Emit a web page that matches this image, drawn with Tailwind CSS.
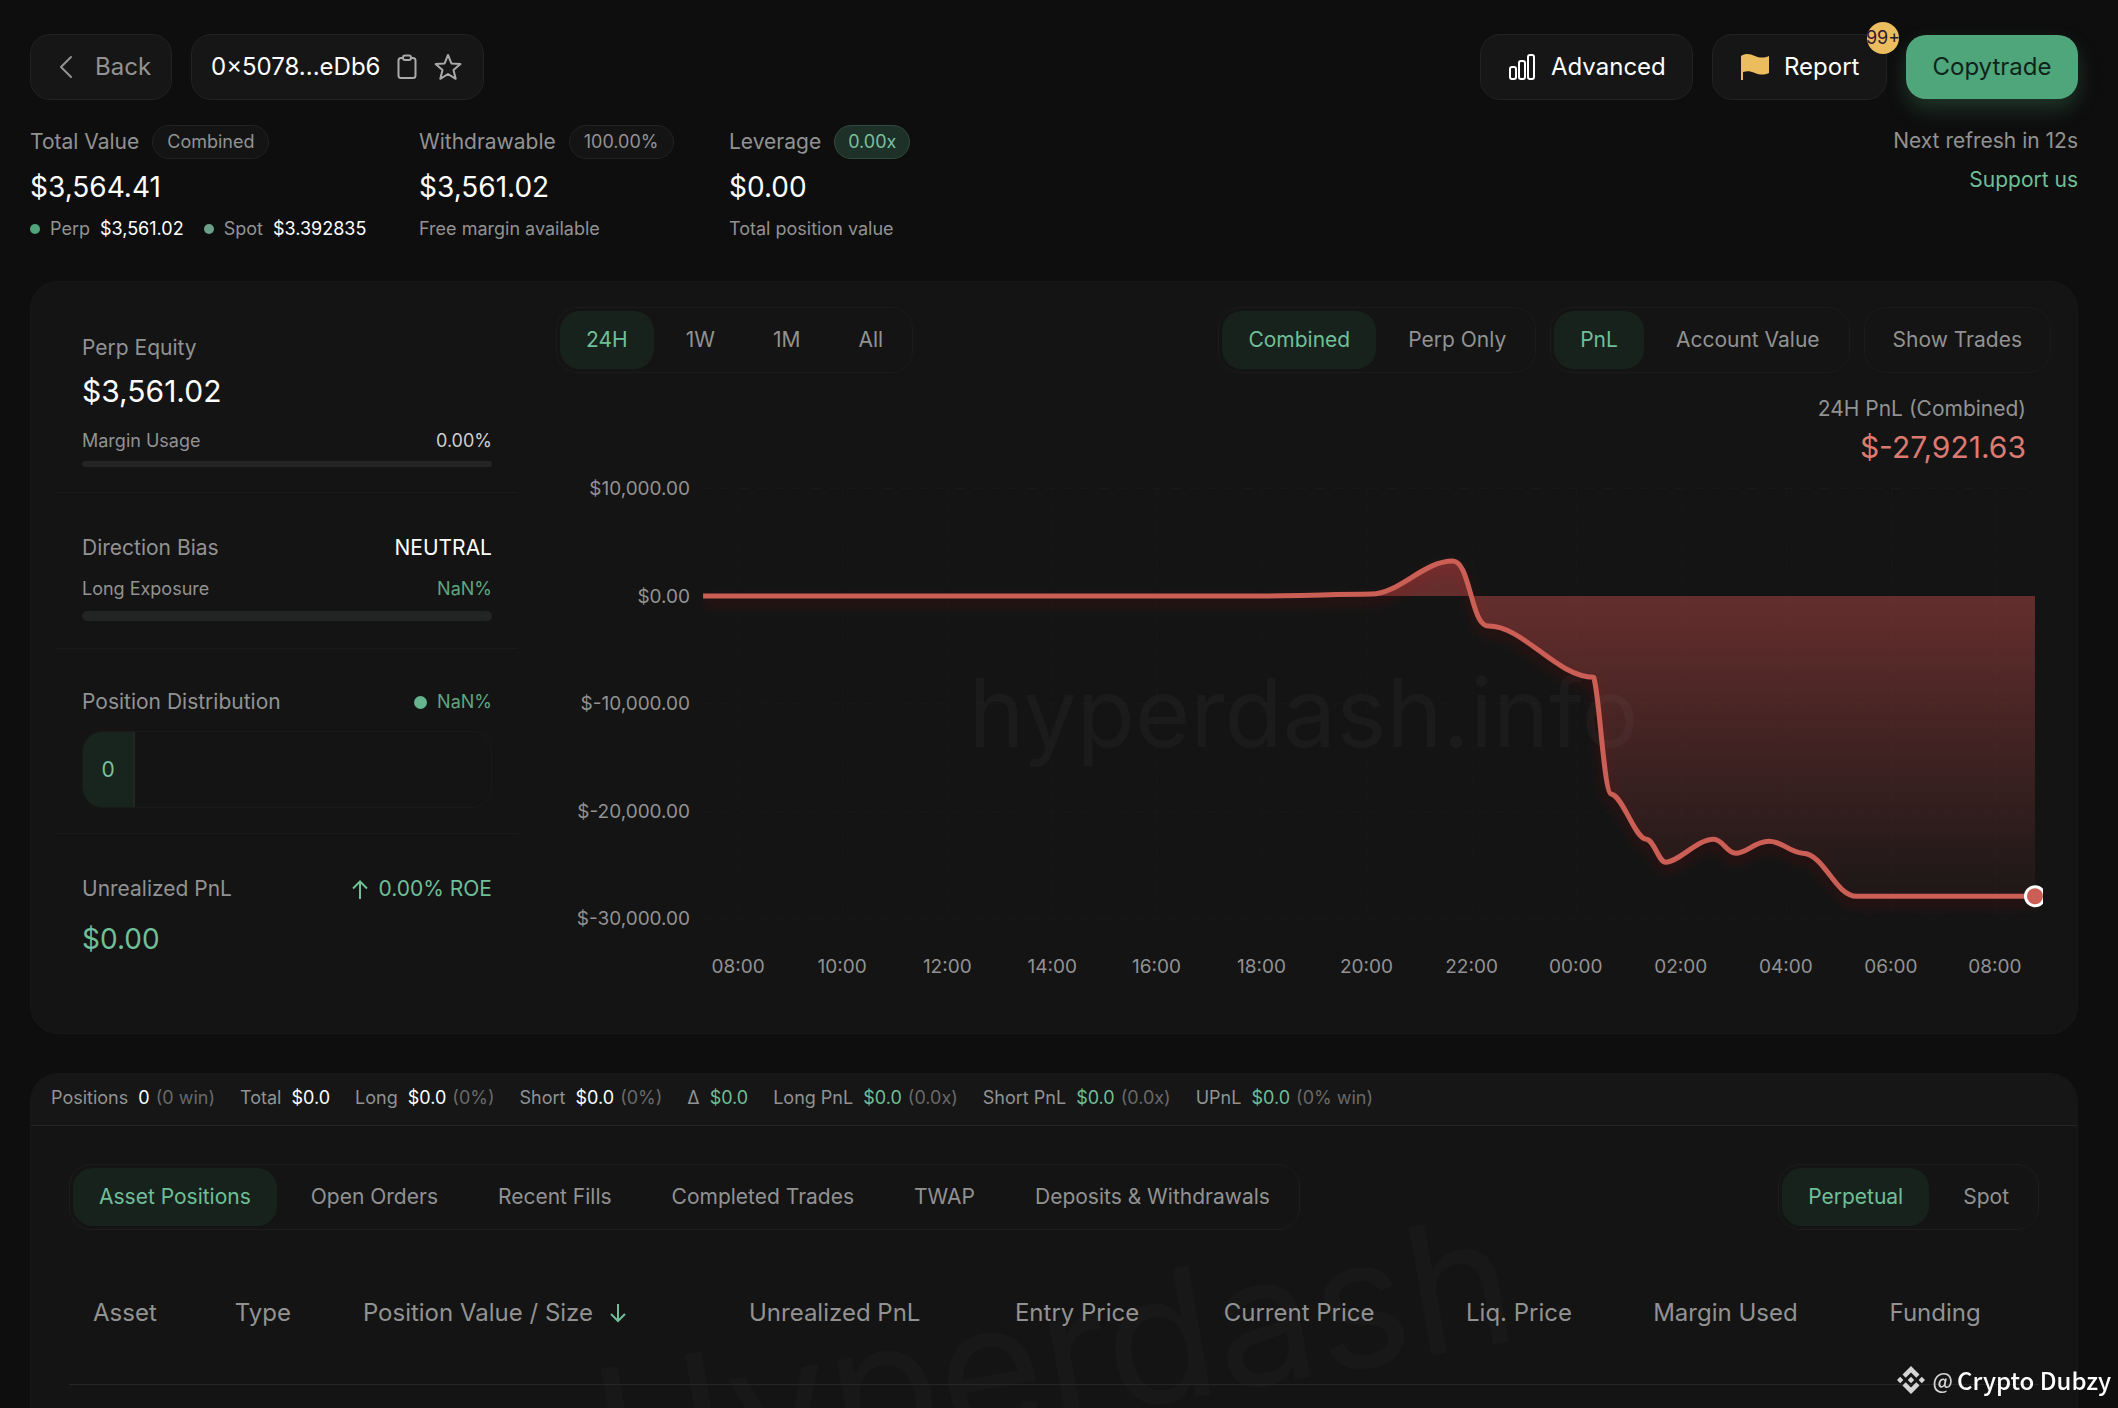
<!DOCTYPE html>
<html lang="en">
<head>
<meta charset="utf-8">
<title>Trader 0x5078...eDb6</title>
<script src="https://cdn.jsdelivr.net/npm/@tailwindcss/browser@4"></script>
</head>
<body class="h-screen overflow-hidden bg-[#0e0e0e] font-['Inter',sans-serif] text-[#929292]">
<div class="flex h-full flex-col pr-10 pl-[30px] pt-[34px]">

  <!-- Top bar -->
  <header class="flex shrink-0 items-center justify-between">
    <div class="flex gap-[19px]">
      <button class="flex h-[66px] w-[142px] items-center gap-[22px] rounded-[20px] border border-[#222] bg-[#161616] pl-7 text-2xl">
        <svg class="h-6 w-[14px]" viewBox="0 0 14 24" fill="none" stroke="currentColor" stroke-width="2" stroke-linecap="round" stroke-linejoin="round"><path d="M12 2 2 12l10 10"/></svg>
        Back
      </button>
      <div class="flex h-[66px] w-[293px] items-center rounded-[20px] border border-[#222] bg-[#161616] pl-[19px]">
        <span class="w-[186px] text-2xl text-white">0×5078...eDb6</span>
        <button aria-label="Copy address" class="mr-[17px]">
          <svg class="h-[26px] w-5" viewBox="0 0 20 26" fill="none" stroke="#aaa" stroke-width="2" stroke-linejoin="round"><path d="M6 4H4a2.500 2.500 0 0 0-2.500 2.500v15A2.500 2.500 0 0 0 4 24h12a2.500 2.500 0 0 0 2.500-2.500v-15A2.500 2.500 0 0 0 16 4h-2"/><rect x="6" y="1.500" width="8" height="4.500" rx="2"/></svg>
        </button>
        <button aria-label="Add to favourites">
          <svg class="size-7" viewBox="0 0 28 28" fill="none" stroke="#aaa" stroke-width="2" stroke-linejoin="round"><path d="M14 2l3.400 8.400 9 .7-6.900 5.900 2.200 8.800-7.700-4.800-7.700 4.800 2.200-8.800L1.600 11.100l9-.7z"/></svg>
        </button>
      </div>
    </div>
    <div class="flex items-center gap-[19px]">
      <button class="flex h-[66px] w-[213px] items-center gap-[15px] rounded-[20px] border border-[#222] bg-[#161616] pl-7 text-2xl text-white">
        <svg class="h-7 w-[27px]" viewBox="0 0 27 28" fill="none" stroke="currentColor" stroke-width="2"><rect x="1" y="14" width="6" height="12" rx="2"/><rect x="10" y="8" width="6" height="18" rx="2"/><rect x="19" y="2" width="6" height="24" rx="2"/></svg>
        Advanced
      </button>
      <button class="relative flex h-[66px] w-[175px] items-center gap-[15px] rounded-[20px] border border-[#222] bg-[#161616] pl-7 text-2xl text-white">
        <svg class="h-[27px] w-7" viewBox="0 0 28 27" fill="#ecbd5e"><path d="M0 26V2c5-3 9-2 14 0s9 2 14 0v17c-5 2-9 2-14 0s-8-2-12-1v8z"/></svg>
        Report
        <span class="absolute -top-[13px] -right-[13px] flex size-8 items-center justify-center rounded-full bg-[#ecbd5e] text-lg text-[#2b1a30]">99+</span>
      </button>
      <button class="h-16 w-[172px] rounded-[20px] bg-[#50a67b] text-2xl text-[#0f2419] shadow-[0_10px_20px_#50a67b40]">Copytrade</button>
    </div>
  </header>

  <!-- Account summary -->
  <section class="mt-[25px] flex shrink-0 items-start justify-between">
    <div class="flex gap-[51px]">
      <div class="w-[338px]">
        <div class="flex h-[34px] items-center gap-[13px] text-[21px]">Total Value <span class="flex h-full items-center rounded-full border border-[#222] bg-[#141414] px-[14px] text-lg">Combined</span></div>
        <div class="mt-2 text-[28px] leading-10 text-white">$3,564.41</div>
        <div class="mt-2 flex items-center text-lg leading-7"><i class="mr-[10px] size-[10px] rounded-full bg-[#50a67b]"></i>Perp<span class="ml-[10px] text-white">$3,561.02</span><i class="mr-[10px] ml-5 size-[10px] rounded-full bg-[#6b9f8a]"></i>Spot<span class="ml-[10px] text-white">$3.392835</span></div>
      </div>
      <div class="w-[259px]">
        <div class="flex h-[34px] items-center gap-[13px] text-[21px]">Withdrawable <span class="flex h-full items-center rounded-full border border-[#222] bg-[#141414] px-[14px] text-lg">100.00%</span></div>
        <div class="mt-2 text-[28px] leading-10 text-white">$3,561.02</div>
        <div class="mt-2 text-lg leading-7">Free margin available</div>
      </div>
      <div>
        <div class="flex h-[34px] items-center gap-[13px] text-[21px]">Leverage <span class="flex h-full items-center rounded-full border border-[#33483e] bg-[#1d3128] px-[13px] text-lg text-[#79c09d]">0.00x</span></div>
        <div class="mt-2 text-[28px] leading-10 text-white">$0.00</div>
        <div class="mt-2 text-lg leading-7">Total position value</div>
      </div>
    </div>
    <div class="flex flex-col items-end gap-[7px] text-[21px] leading-8">
      <span>Next refresh in 12s</span>
      <a href="#support" class="text-[#6fbf98]">Support us</a>
    </div>
  </section>

  <!-- Equity panel and PnL chart -->
  <main class="mt-[38px] flex h-[753px] shrink-0 rounded-[28px] border border-[#181818] bg-[#141414] pr-[26px] pl-[25px]">
    <aside class="w-[462px] shrink-0 pt-[25px]">
      <div class="h-[186px] border-b border-[#1a1a1a] px-[26px] pt-[26px]">
        <div class="text-[21px] leading-[30px]">Perp Equity</div>
        <div class="mt-2 text-3xl leading-10 text-white">$3,561.02</div>
        <div class="mt-4 flex justify-between text-lg leading-7"><span>Margin Usage</span><span class="text-[#d0d0d0]">0.00%</span></div>
        <div class="mt-[6px] h-[6px] rounded-full bg-[#232424]"></div>
      </div>
      <div class="h-[156px] border-b border-[#1a1a1a] px-[26px] pt-10">
        <div class="flex justify-between text-[21px] leading-[30px]"><span>Direction Bias</span><span class="text-white">NEUTRAL</span></div>
        <div class="mt-3 flex justify-between text-lg leading-7"><span>Long Exposure</span><span class="text-[#5ea585]">NaN%</span></div>
        <div class="mt-2 h-[10px] rounded-full bg-[#232424]"></div>
      </div>
      <div class="h-[185px] border-b border-[#1a1a1a] px-[26px] pt-[38px]">
        <div class="flex items-center justify-between text-[21px] leading-[30px]"><span>Position Distribution</span><span class="flex items-center gap-[10px] text-lg text-[#5ea585]"><i class="size-[13px] rounded-full bg-[#65b48e]"></i>NaN%</span></div>
        <div class="mt-[14px] h-[77px] overflow-hidden rounded-[20px] border border-[#1a1a1a]">
          <div class="flex h-full w-[52px] items-center justify-center border-r-2 border-[#242726] bg-[#18241e] text-[21px] text-[#79c09d]">0</div>
        </div>
      </div>
      <div class="px-[26px] pt-10">
        <div class="flex items-center justify-between text-[21px] leading-[30px]"><span>Unrealized PnL</span>
          <span class="flex items-center gap-[11px] text-[#6fbf98]"><svg class="h-[19px] w-4" viewBox="0 0 16 19" fill="none" stroke="currentColor" stroke-width="2"><path d="M8 19V1.500M1 8.500l7-7 7 7"/></svg>0.00% ROE</span></div>
        <div class="mt-[15px] text-[28px] leading-10 text-[#6fbf98]">$0.00</div>
      </div>
    </aside>

    <section class="ml-[38px] min-w-0 flex-1 pt-[25px]">
      <div class="flex justify-between text-[21px]">
        <div class="flex h-[66px] gap-[6px] rounded-[22px] border border-[#1b1b1b] p-[3px]">
          <button class="rounded-[20px] bg-[#18221d] px-[26px] text-[#6fbf98]">24H</button>
          <button class="px-[26px]">1W</button>
          <button class="px-[26px]">1M</button>
          <button class="px-[26px]">All</button>
        </div>
        <div class="flex gap-[14px]">
          <div class="flex h-[66px] gap-[6px] rounded-[22px] border border-[#1b1b1b] p-[3px]">
            <button class="rounded-[20px] bg-[#18221d] px-[26px] text-[#6fbf98]">Combined</button>
            <button class="px-[26px]">Perp Only</button>
          </div>
          <div class="flex h-[66px] gap-[6px] rounded-[22px] border border-[#1b1b1b] p-[3px]">
            <button class="rounded-[20px] bg-[#18221d] px-[26px] text-[#6fbf98]">PnL</button>
            <button class="px-[26px]">Account Value</button>
          </div>
          <button class="h-[66px] rounded-[22px] border border-[#1b1b1b] px-7">Show Trades</button>
        </div>
      </div>
      <div class="mt-[21px] pr-[25px] text-right">
        <div class="text-[21px] leading-[30px]">24H PnL (Combined)</div>
        <div class="text-3xl leading-[46px] text-[#dc7a72]">$-27,921.63</div>
      </div>

      <svg class="block w-full" viewBox="0 0 1494 520" role="img" aria-label="24 hour profit and loss">
        <defs>
          <linearGradient id="area" gradientUnits="userSpaceOnUse" x1="0" y1="90" x2="0" y2="426">
            <stop offset="0" stop-color="#d0514f" stop-opacity=".46"/><stop offset=".12" stop-color="#d0514f" stop-opacity=".42"/><stop offset="1" stop-color="#d0514f" stop-opacity=".05"/>
          </linearGradient>
          <filter id="glow" filterUnits="userSpaceOnUse" x="147" y="60" width="1400" height="420"><feDropShadow dx="0" dy="6" stdDeviation="6" flood-color="#d02818" flood-opacity=".25"/></filter>
        </defs>
        <g stroke="#191919" stroke-dasharray="9 9">
          <path d="M147 18.500H1478M147 233.500H1478M147 341.500H1478M147 448.500H1478"/>
          <path d="M181.500 18V448M286.500 18V448M391.500 18V448M495.500 18V448M600.500 18V448M705.500 18V448M810.500 18V448M915.500 18V448M1019.500 18V448M1124.500 18V448M1229.500 18V448M1334.500 18V448M1438.500 18V448"/>
        </g>
        <path fill="url(#area)" d="M147 126H690C740 126 770 124.500 815 124C842 124 867 91 896 91C906 91 910 110 915 127C920 145 924 156 932 156C967 156 1000 207 1037 207C1043 225 1047 324 1055 324C1067 327 1078 369 1090 369C1098 371 1102 392 1109 392C1122 392 1140 369 1157 369C1166 369 1170 383 1179 383C1190 383 1198 371 1212 371C1226 371 1232 382 1246 383C1268 384 1278 426 1300 426H1478V126Z"/>
        <text x="747" y="277" text-anchor="middle" font-size="95" fill="#fff" fill-opacity=".03">hyperdash.info</text>
        <path filter="url(#glow)" fill="none" stroke="#cb5e55" stroke-width="5" stroke-linejoin="round" d="M147 126H690C740 126 770 124.500 815 124C842 124 867 91 896 91C906 91 910 110 915 127C920 145 924 156 932 156C967 156 1000 207 1037 207C1043 225 1047 324 1055 324C1067 327 1078 369 1090 369C1098 371 1102 392 1109 392C1122 392 1140 369 1157 369C1166 369 1170 383 1179 383C1190 383 1198 371 1212 371C1226 371 1232 382 1246 383C1268 384 1278 426 1300 426H1478"/>
        <clipPath id="edge"><rect x="1400" y="400" width="86" height="60"/></clipPath>
        <circle clip-path="url(#edge)" cx="1478" cy="426" r="9.500" fill="#cb5e55" stroke="#fff" stroke-width="3"/>
        <g font-size="19" fill="#929292" text-anchor="end">
          <text x="134" y="25">$10,000.00</text><text x="134" y="133">$0.00</text><text x="134" y="240">$-10,000.00</text><text x="134" y="348">$-20,000.00</text><text x="134" y="455">$-30,000.00</text>
        </g>
        <g font-size="19" fill="#929292" text-anchor="middle">
          <text x="182" y="503">08:00</text><text x="286" y="503">10:00</text><text x="391" y="503">12:00</text><text x="496" y="503">14:00</text><text x="600" y="503">16:00</text><text x="705" y="503">18:00</text><text x="810" y="503">20:00</text><text x="915" y="503">22:00</text><text x="1019" y="503">00:00</text><text x="1124" y="503">02:00</text><text x="1229" y="503">04:00</text><text x="1334" y="503">06:00</text><text x="1438" y="503">08:00</text>
        </g>
      </svg>
    </section>
  </main>

  <!-- Positions -->
  <section class="relative mt-[39px] min-h-0 flex-1 overflow-hidden rounded-t-[28px] border border-b-0 border-[#181818] bg-[#141414]">
    <div aria-hidden="true" class="absolute top-[172px] left-1/2 -translate-x-1/2 -rotate-10 text-[180px] leading-[220px] whitespace-nowrap text-white/2">Hyperdash</div>
    <div class="relative">
      <div class="flex h-[52px] items-center gap-[25px] border-b border-[#242424] bg-[#161616] px-5 pb-[3px] text-lg text-[#929292]">
        <span>Positions <b class="mr-px ml-[5px] font-normal text-white">0</b> <span class="text-[#696969]">(0 win)</span></span>
        <span>Total <b class="ml-[5px] font-normal text-white">$0.0</b></span>
        <span>Long <b class="mr-px ml-[5px] font-normal text-white">$0.0</b> <span class="text-[#696969]">(0%)</span></span>
        <span>Short <b class="mr-px ml-[5px] font-normal text-white">$0.0</b> <span class="text-[#696969]">(0%)</span></span>
        <span>Δ <b class="ml-[5px] font-normal text-[#6fbf98]">$0.0</b></span>
        <span>Long PnL <b class="mr-px ml-[5px] font-normal text-[#6fbf98]">$0.0</b> <span class="text-[#696969]">(0.0x)</span></span>
        <span>Short PnL <b class="mr-px ml-[5px] font-normal text-[#6fbf98]">$0.0</b> <span class="text-[#696969]">(0.0x)</span></span>
        <span>UPnL <b class="mr-px ml-[5px] font-normal text-[#6fbf98]">$0.0</b> <span class="text-[#696969]">(0% win)</span></span>
      </div>
      <div class="px-[38px] pt-[38px] text-[21px]">
        <div class="flex justify-between">
          <div class="flex h-[66px] gap-2 rounded-[22px] border border-[#1d1d1d] p-[3px]">
            <button class="rounded-[20px] bg-[#18221d] px-[26px] text-[#6fbf98]">Asset Positions</button>
            <button class="px-[26px]">Open Orders</button>
            <button class="px-[26px]">Recent Fills</button>
            <button class="px-[26px]">Completed Trades</button>
            <button class="px-[26px]">TWAP</button>
            <button class="px-[26px]">Deposits &amp; Withdrawals</button>
          </div>
          <div class="flex h-[66px] gap-2 rounded-[22px] border border-[#1d1d1d] p-[3px]">
            <button class="rounded-[20px] bg-[#18221d] px-[26px] text-[#6fbf98]">Perpetual</button>
            <button class="px-[26px]">Spot</button>
          </div>
        </div>
        <table class="mt-3 w-full table-fixed text-left text-2xl">
          <thead>
            <tr class="h-[142px] border-b border-[#262626] [&>th]:pl-6 [&>th]:font-normal">
              <th class="w-[7.200%]">Asset</th>
              <th class="w-[6.500%]">Type</th>
              <th class="w-[19.600%]"><span class="flex items-center gap-4">Position Value / Size <svg class="h-5 w-[18px]" viewBox="0 0 18 20" fill="none" stroke="#6fbf98" stroke-width="2"><path d="M9 1v17M2 11l7 7 7-7"/></svg></span></th>
              <th class="w-[13.500%]">Unrealized PnL</th>
              <th class="w-[10.600%]">Entry Price</th>
              <th class="w-[12.300%]">Current Price</th>
              <th class="w-[9.500%]">Liq. Price</th>
              <th class="w-[12.000%]">Margin Used</th>
              <th>Funding</th>
            </tr>
          </thead>
        </table>
      </div>
    </div>
  </section>
</div>

<!-- Author tag -->
<div class="fixed right-[7px] bottom-[10px] flex items-center gap-1 font-['Noto_Sans_CJK_SC',sans-serif] text-2xl leading-9 font-medium text-white">
  <svg class="mr-1 size-7" viewBox="0 0 28 28" fill="#d4d4d4"><path d="M14 0l8.500 8.500-3.200 3.200L14 6.400l-5.300 5.300-3.200-3.200zM14 28l8.500-8.500-3.200-3.200-5.300 5.300-5.300-5.300-3.200 3.200zM3.200 10.800 6.400 14l-3.200 3.200L0 14zM24.800 10.800 28 14l-3.200 3.200-3.200-3.200zM14 10.800l3.200 3.200-3.200 3.200-3.200-3.200z"/></svg>
  <span class="text-[21px] text-[#d4d4d4]">@</span><span>Crypto Dubzy</span>
</div>
</body>
</html>
